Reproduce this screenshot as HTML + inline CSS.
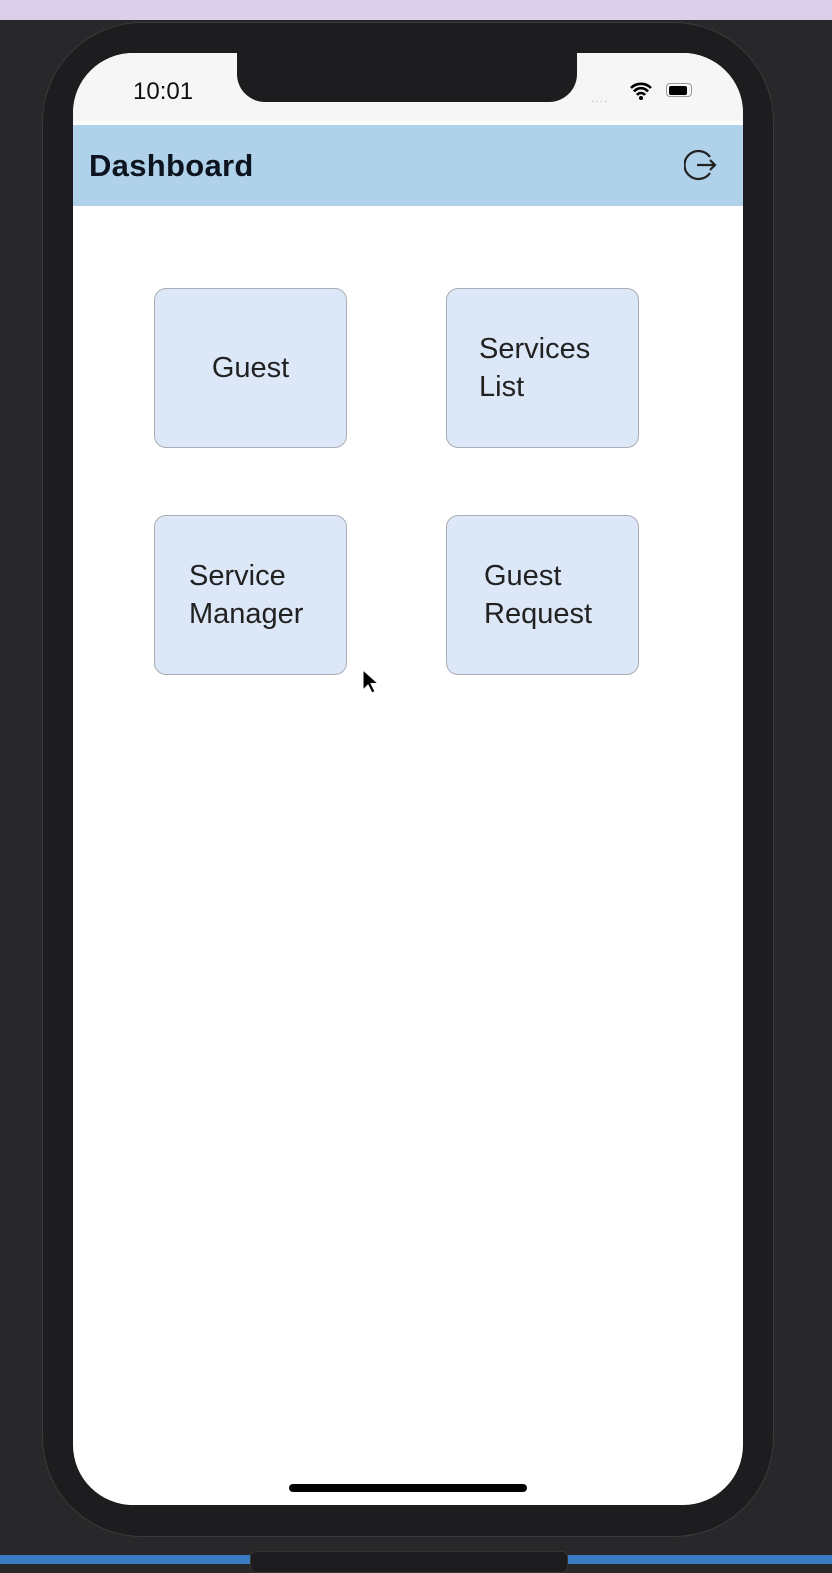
<!DOCTYPE html>
<html><head><style>
body{margin:0;width:832px;height:1564px;background:#28282a;position:relative;overflow:hidden;font-family:"Liberation Sans",sans-serif}
.top{position:absolute;left:0;top:0;width:832px;height:20px;background:#dbd0eb}
.bot{position:absolute;left:0;top:1555px;width:832px;height:9px;background:#3a7cc4}
.tab{position:absolute;left:250px;top:1551px;width:316px;height:20px;background:#1c1c1e;border-radius:6px;border:1px solid #333}
.phone{position:absolute;left:42px;top:22px;width:732px;height:1515px;background:#1d1d1f;border-radius:100px;border:1px solid #3a3a3c;box-sizing:border-box}
.screen{position:absolute;left:73px;top:53px;width:670px;height:1452px;background:#fff;border-radius:60px;overflow:hidden}
.status{position:absolute;left:0;top:0;width:670px;height:68px;background:#f6f6f6}
.notch{position:absolute;left:164px;top:0;width:340px;height:49px;background:#1d1d1f;border-radius:0 0 28px 28px}
.time{position:absolute;left:60px;top:25px;font-size:24px;color:#111}
.hdr{position:absolute;left:0;top:72px;width:670px;height:81px;background:#afd2ea}
.hdr span{position:absolute;left:16px;top:23px;font-size:31px;font-weight:bold;color:#0d1420;letter-spacing:0.3px}
.card{position:absolute;width:193px;height:160px;background:#dce8f7;border:1.5px solid #a9acb2;border-radius:12px;box-sizing:border-box;font-size:29px;color:#222;display:flex;align-items:center}
.home{position:absolute;left:216px;top:1431px;width:238px;height:8px;background:#000;border-radius:4px}
</style></head><body>
<div class="top"></div>
<div class="bot"></div><div class="tab"></div>
<div class="phone"></div>
<div class="screen">
<div class="status"></div>
<div class="notch"></div>
<div class="time">10:01</div>
<div style="position:absolute;left:518px;top:38px;font-size:12px;color:#bbb;letter-spacing:1px">....</div>
<svg style="position:absolute;left:556px;top:28px" width="24" height="20" viewBox="0 0 24 20"><path d="M2 7a14 14 0 0 1 20 0M5 10.5a9 9 0 0 1 14 0M8 14a5 5 0 0 1 8 0" stroke="#000" stroke-width="2.6" fill="none"/><circle cx="12" cy="17" r="2" fill="#000"/></svg>
<div style="position:absolute;left:593px;top:30px;width:26px;height:14px;border:1.5px solid #999;border-radius:4px;box-sizing:border-box;padding:1.5px"><div style="width:18px;height:100%;background:#000;border-radius:2px"></div></div>
<div class="hdr"><span>Dashboard</span>
<svg style="position:absolute;left:611px;top:23px" width="34" height="34" viewBox="0 0 34 34"><path d="M26 9A14 14 0 1 0 26 25" stroke="#222" stroke-width="2.2" fill="none"/><path d="M13 17H31M26 12l5 5-5 5" stroke="#222" stroke-width="2.2" fill="none"/></svg></div>
<div class="home"></div>
</div>
<div class="card" style="left:154px;top:288px;justify-content:center">Guest</div>
<div class="card" style="left:446px;top:288px;padding-left:32px;line-height:38px">Services<br>List</div>
<div class="card" style="left:154px;top:515px;padding-left:34px;line-height:38px">Service<br>Manager</div>
<div class="card" style="left:446px;top:515px;padding-left:37px;line-height:38px">Guest<br>Request</div>
<svg style="position:absolute;left:362px;top:669px" width="16" height="26" viewBox="0 0 16 26"><path d="M1 1v20l5-5 4 8 3-1.5-4-8h7z" fill="#000" stroke="#fff" stroke-width="1"/></svg>
</body></html>
